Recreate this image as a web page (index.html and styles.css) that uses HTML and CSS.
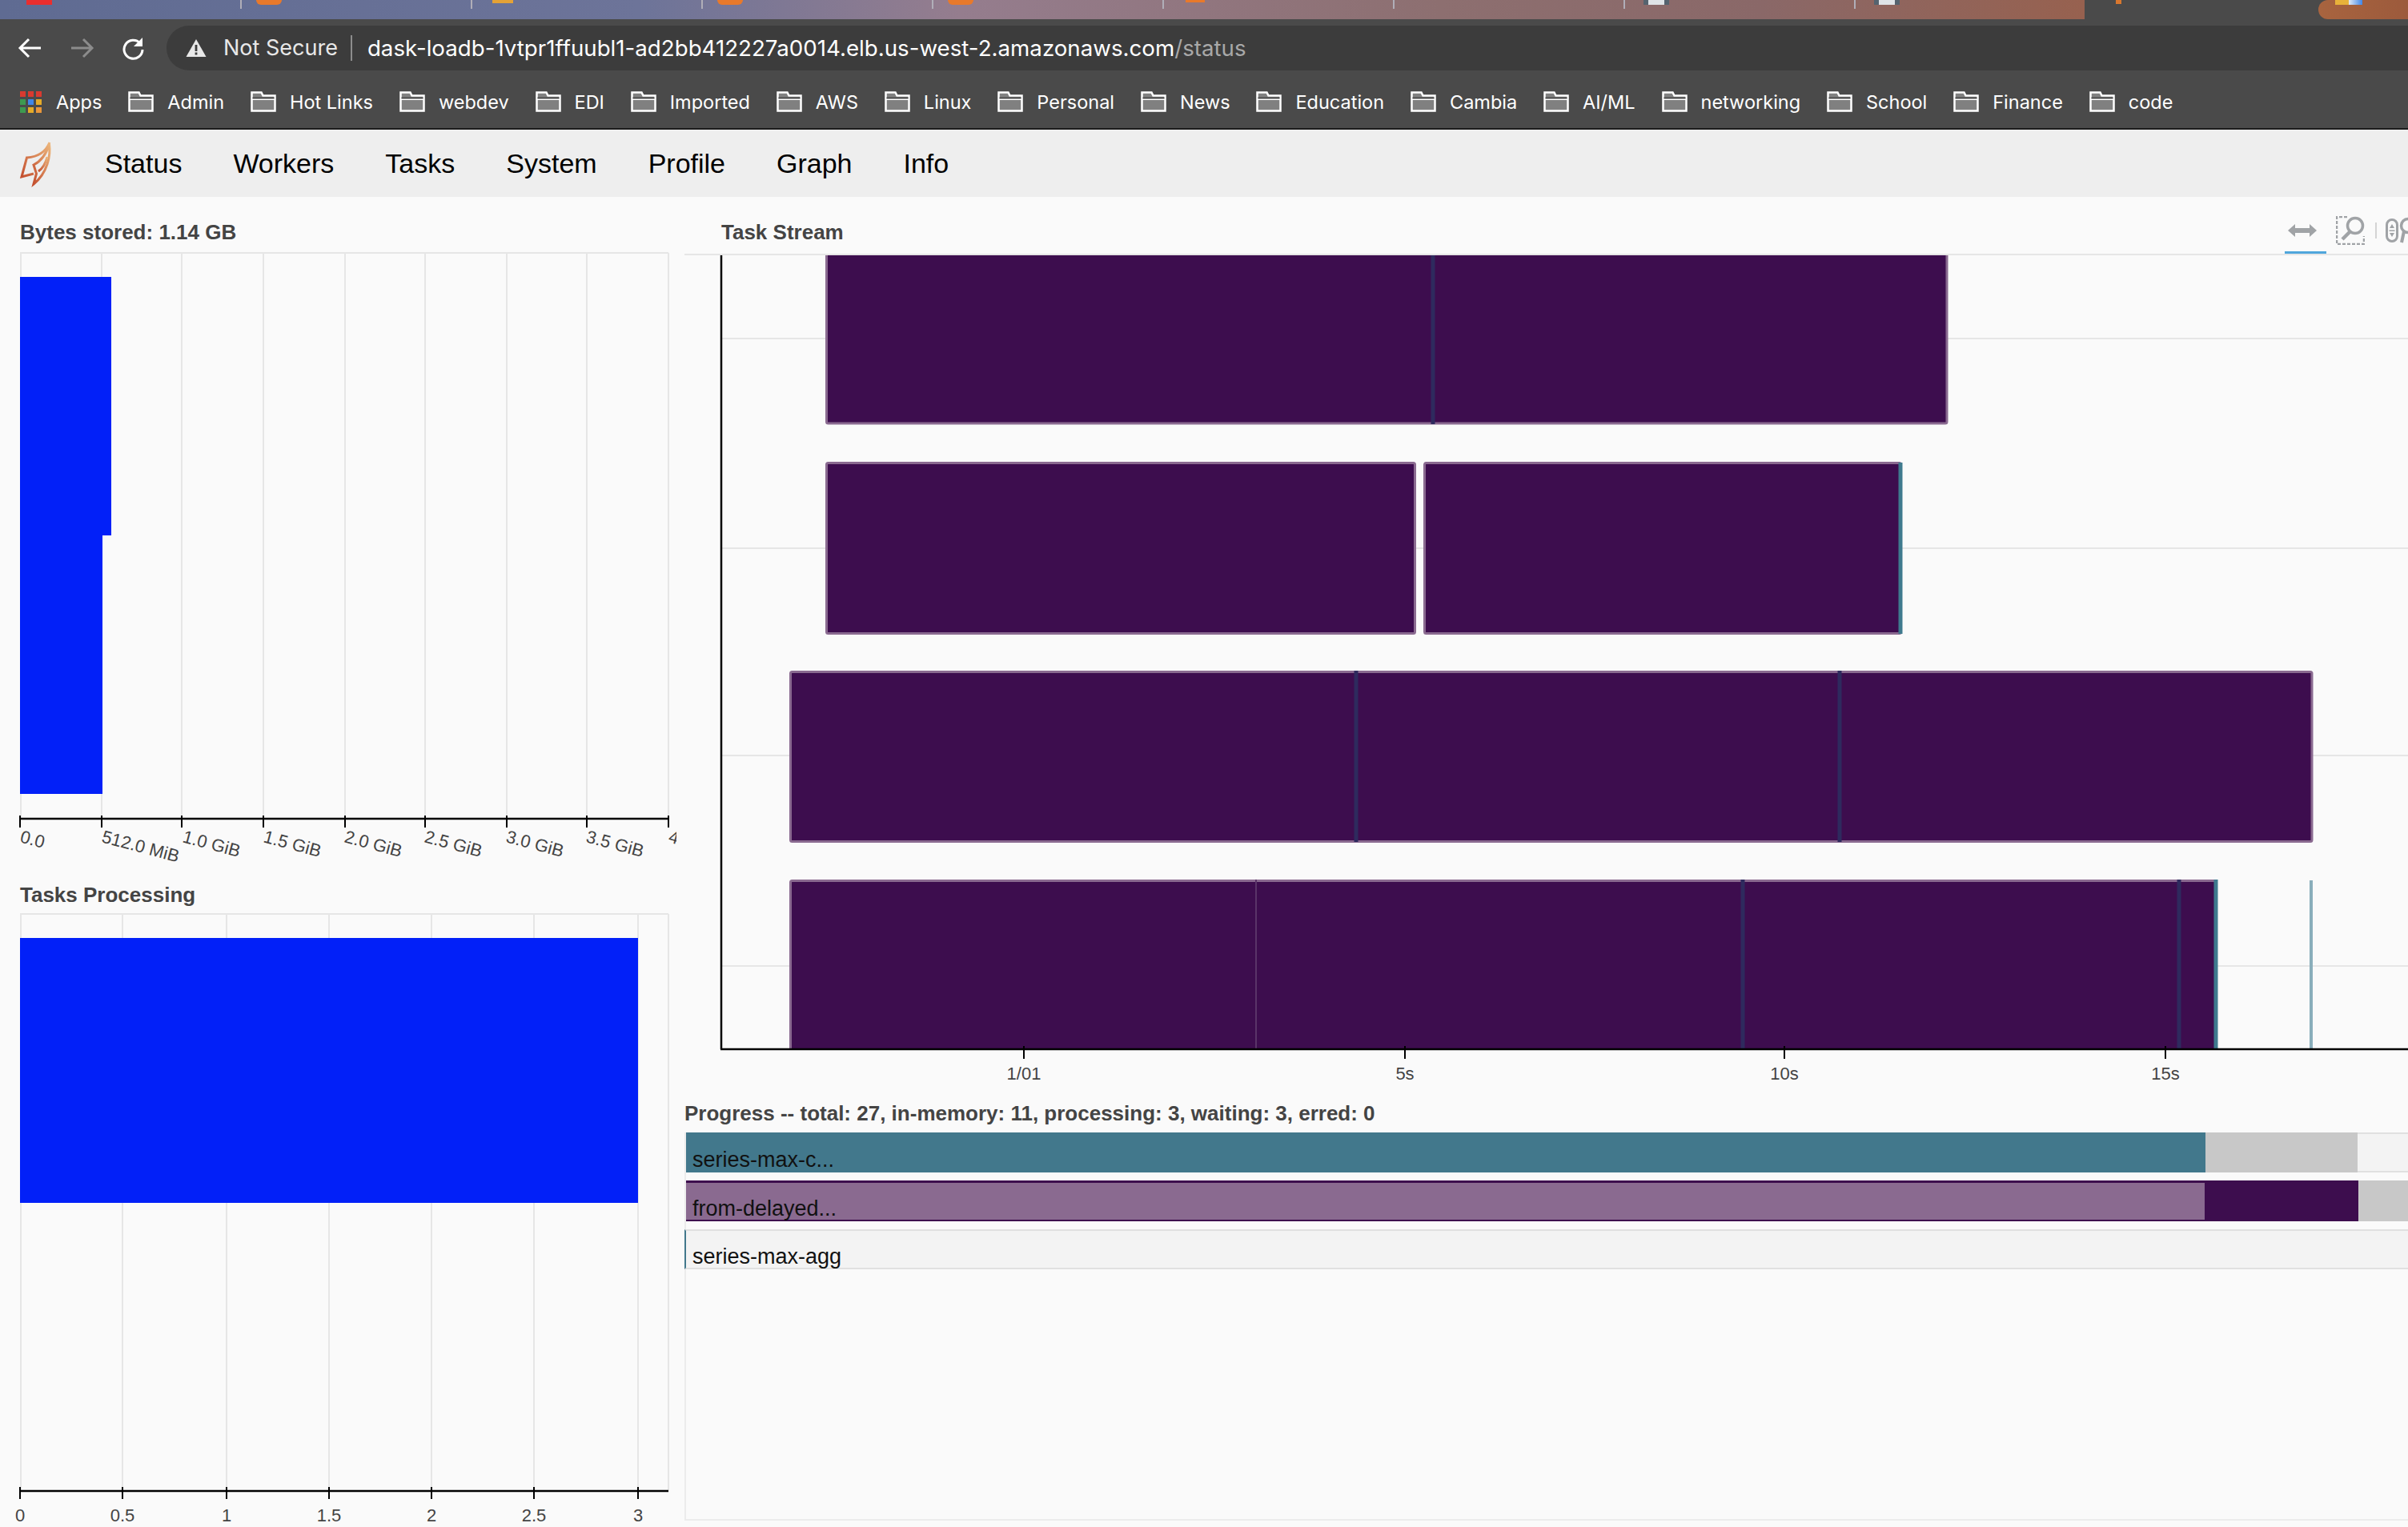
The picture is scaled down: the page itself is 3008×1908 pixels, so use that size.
FILE: index.html
```html
<!DOCTYPE html>
<html lang="en">
<head>
    <meta charset="UTF-8">
    <meta name="viewport" content="width=device-width, initial-scale=1.0">
    <title>Dask: Status</title>
    <link rel="stylesheet" href="styles.css">
</head>
<body>
    <div class="tabstrip">
        <span class="tab tab-first"><i class="favicon favicon-mail"></i></span>
        <span class="tab"><i class="favicon favicon-orange"></i></span>
        <span class="tab"><i class="favicon favicon-amber"></i></span>
        <span class="tab"><i class="favicon favicon-orange"></i></span>
        <span class="tab"><i class="favicon favicon-orange"></i></span>
        <span class="tab"><i class="favicon favicon-outline"></i></span>
        <span class="tab"></span>
        <span class="tab"><i class="favicon favicon-slate"></i></span>
        <span class="tab tab-last"><i class="favicon favicon-slate"></i></span>
        <span class="tab-active"><i class="favicon favicon-spark"></i></span>
        <span class="tab-next"><i class="favicon favicon-flag"></i></span>
    </div>

    <div class="toolbar">
        <svg class="nav-icon" viewBox="0 0 32 32"><path d="M29 16H4M14 5L3 16l11 11" fill="none" stroke="#fff" stroke-width="3"/></svg>
        <svg class="nav-icon" viewBox="0 0 32 32"><path d="M3 16h25M18 5l11 11-11 11" fill="none" stroke="#8c8c8c" stroke-width="3"/></svg>
        <svg class="nav-icon" viewBox="0 0 32 32"><path d="M25 10a11.500 11.500 0 1 0 3 8" fill="none" stroke="#fff" stroke-width="3"/><path d="M28 3v11H17z" fill="#fff"/></svg>
        <div class="omnibox">
            <svg class="warn-icon" viewBox="0 0 26 24"><path d="M13 1l12.500 22H.5z" fill="#e8e8e8"/><path d="M11.600 8h2.800v8h-2.800zM11.600 17.500h2.800v3h-2.800z" fill="#3c3c3c"/></svg>
            <span class="not-secure">Not Secure</span>
            <span class="url">dask-loadb-1vtpr1ffuubl1-ad2bb412227a0014.elb.us-west-2.amazonaws.com<span class="url-path">/status</span></span>
        </div>
    </div>

    <div class="bookmarks">
        <a class="bookmark"><span class="apps-grid"><i class="r"></i><i class="r"></i><i class="r"></i><i class="g"></i><i class="b"></i><i class="y"></i><i class="g"></i><i class="y"></i><i class="o"></i></span>Apps</a>
        <a class="bookmark"><svg class="folder"><use href="#folder"/></svg>Admin</a>
        <a class="bookmark"><svg class="folder"><use href="#folder"/></svg>Hot Links</a>
        <a class="bookmark"><svg class="folder"><use href="#folder"/></svg>webdev</a>
        <a class="bookmark"><svg class="folder"><use href="#folder"/></svg>EDI</a>
        <a class="bookmark"><svg class="folder"><use href="#folder"/></svg>Imported</a>
        <a class="bookmark"><svg class="folder"><use href="#folder"/></svg>AWS</a>
        <a class="bookmark"><svg class="folder"><use href="#folder"/></svg>Linux</a>
        <a class="bookmark"><svg class="folder"><use href="#folder"/></svg>Personal</a>
        <a class="bookmark"><svg class="folder"><use href="#folder"/></svg>News</a>
        <a class="bookmark"><svg class="folder"><use href="#folder"/></svg>Education</a>
        <a class="bookmark"><svg class="folder"><use href="#folder"/></svg>Cambia</a>
        <a class="bookmark"><svg class="folder"><use href="#folder"/></svg>AI/ML</a>
        <a class="bookmark"><svg class="folder"><use href="#folder"/></svg>networking</a>
        <a class="bookmark"><svg class="folder"><use href="#folder"/></svg>School</a>
        <a class="bookmark"><svg class="folder"><use href="#folder"/></svg>Finance</a>
        <a class="bookmark"><svg class="folder"><use href="#folder"/></svg>code</a>
    </div>

    <svg class="defs">
        <symbol id="folder" viewBox="0 0 32 26">
            <path d="M1.500 24.500V1.500h12l2 4h15v19z" fill="#808080" stroke="#fff" stroke-width="2.500"/>
            <path d="M2 10h29" stroke="#fff" stroke-width="2"/>
            <path d="M2.500 7.500h27v2h-27z" fill="#4a4a4a"/>
        </symbol>
        <linearGradient id="leaf" x1="0" y1="1" x2="1" y2="0">
            <stop offset="0" stop-color="#c4502f"/>
            <stop offset="1" stop-color="#ecb67c"/>
        </linearGradient>
        <clipPath id="bytes-clip"><rect x="0" y="310" width="845" height="788"/></clipPath>
    </svg>

    <nav class="topnav">
        <svg class="logo" viewBox="20 168 50 64">
            <g fill="none" stroke="url(#leaf)" stroke-width="3">
                <path d="M42 213l-15 4 6.500-24c14-1 24-8 28.500-19"/>
                <path d="M42 226l3.500-13-3.500-11c10-5 16-14 19.500-26 2 14-2 36-19.500 50z"/>
                <path d="M48 210c6-4 9-10 11-18"/>
            </g>
        </svg>
        <a class="nav-link">Status</a>
        <a class="nav-link">Workers</a>
        <a class="nav-link">Tasks</a>
        <a class="nav-link">System</a>
        <a class="nav-link">Profile</a>
        <a class="nav-link">Graph</a>
        <a class="nav-link">Info</a>
    </nav>

    <main class="dashboard">
        <section class="left-col">
            <h2 class="plot-title">Bytes stored: 1.14 GB</h2>
            <svg class="plot plot-bytes" viewBox="0 310 855 788">
                <path class="grid" d="M25 316H835M26 316V1022M127 316V1022M227 316V1022M329 316V1022M431 316V1022M531 316V1022M633 316V1022M733 316V1022M835 316V1022"/>
                <path class="bar-blue" d="M25 346H139V669H128V992H25z"/>
                <path class="axis" d="M25 1023H836"/>
                <path class="tick" d="M25 1019V1034M127 1019V1034M227 1019V1034M329 1019V1034M431 1019V1034M531 1019V1034M633 1019V1034M733 1019V1034M835 1019V1034"/>
                <g class="tick-label" clip-path="url(#bytes-clip)">
                    <text x="24" y="1052" transform="rotate(15 24 1052)">0.0</text>
                    <text x="126" y="1052" transform="rotate(15 126 1052)">512.0 MiB</text>
                    <text x="227" y="1052" transform="rotate(15 227 1052)">1.0 GiB</text>
                    <text x="328" y="1052" transform="rotate(15 328 1052)">1.5 GiB</text>
                    <text x="429" y="1052" transform="rotate(15 429 1052)">2.0 GiB</text>
                    <text x="529" y="1052" transform="rotate(15 529 1052)">2.5 GiB</text>
                    <text x="631" y="1052" transform="rotate(15 631 1052)">3.0 GiB</text>
                    <text x="731" y="1052" transform="rotate(15 731 1052)">3.5 GiB</text>
                    <text x="834" y="1052" transform="rotate(15 834 1052)">4.0 GiB</text>
                </g>
            </svg>
            <h2 class="plot-title">Tasks Processing</h2>
            <svg class="plot plot-tasks" viewBox="0 1138 855 770">
                <path class="grid" d="M25 1142H835M26 1142V1862M153 1142V1862M283 1142V1862M411 1142V1862M539 1142V1862M667 1142V1862M797 1142V1862M835 1142V1862"/>
                <rect class="bar-blue" x="25" y="1172" width="772" height="331"/>
                <path class="axis" d="M25 1863H835"/>
                <path class="tick" d="M25 1858V1873M153 1858V1873M283 1858V1873M411 1858V1873M539 1858V1873M667 1858V1873M797 1858V1873"/>
                <g class="tick-label label-mid">
                    <text x="25" y="1901">0</text>
                    <text x="153" y="1901">0.5</text>
                    <text x="283" y="1901">1</text>
                    <text x="411" y="1901">1.5</text>
                    <text x="539" y="1901">2</text>
                    <text x="667" y="1901">2.5</text>
                    <text x="797" y="1901">3</text>
                </g>
            </svg>
        </section>

        <section class="right-col">
            <div class="stream-head">
                <h2 class="plot-title stream-title">Task Stream</h2>
                <div class="plot-tools">
                    <span class="tool tool-active">
                        <svg class="tool-icon" viewBox="0 0 36 16"><path d="M0 8l9-8v5h18V0l9 8-9 8v-5H9v5z" fill="#a0a3a6"/></svg>
                    </span>
                    <span class="tool tool-box">
                        <svg class="tool-icon" viewBox="0 0 36 36"><path d="M14 1H1v34h34V25" fill="none" stroke="#a0a3a6" stroke-width="2.500" stroke-dasharray="4 2"/><circle cx="24" cy="12" r="9.500" fill="#fafafa" stroke="#a0a3a6" stroke-width="3.500"/><path d="M18 19L8 29" stroke="#a0a3a6" stroke-width="4.500"/></svg>
                    </span>
                    <span class="tool-sep"></span>
                    <span class="tool tool-wheel">
                        <svg class="tool-icon" viewBox="0 0 36 36"><rect x="1.500" y="3.500" width="13" height="27" rx="6.500" fill="none" stroke="#a0a3a6" stroke-width="3"/><path d="M4.500 16.500h7v1.500h-7zM8 9l3 5H5zM8 25l3-5H5z" fill="#a0a3a6"/><circle cx="28" cy="11" r="8.500" fill="none" stroke="#a0a3a6" stroke-width="3.500"/><path d="M23 18l-3 14" stroke="#a0a3a6" stroke-width="4"/></svg>
                    </span>
                </div>
            </div>
            <svg class="plot plot-stream" viewBox="855 319 2153 1051">
                <path class="grid" d="M900 423H3008M900 685H3008M900 944H3008M900 1207H3008"/>
                <g class="task">
                    <rect x="1032.500" y="300" rx="2" width="1399.500" height="229"/>
                    <rect x="1032.500" y="578.500" rx="2" width="735" height="213"/>
                    <rect x="1779.500" y="578.500" rx="2" width="595" height="213"/>
                    <rect x="987.500" y="839.500" rx="2" width="1900.500" height="212"/>
                    <rect x="987.500" y="1100.500" rx="2" width="1780" height="240"/>
                </g>
                <rect class="clear-below" x="960" y="1312" width="1900" height="58"/>
                <path class="task-split" d="M1790 319V530M1694 838V1052M2298 838V1052M2177 1099V1310M2722 1099V1310"/>
                <path class="task-split-faint" d="M1569 1099V1310"/>
                <path class="task-end" d="M2374 578V792M2768 1099V1310"/>
                <rect class="task-short" x="2885" y="1100" width="4" height="210"/>
                <path class="axis" d="M901 317V1311M900 1311H3008"/>
                <path class="tick" d="M1279 1307V1323M1755 1307V1323M2229 1307V1323M2705 1307V1323"/>
                <g class="tick-label label-mid">
                    <text x="1279" y="1349">1/01</text>
                    <text x="1755" y="1349">5s</text>
                    <text x="2229" y="1349">10s</text>
                    <text x="2705" y="1349">15s</text>
                </g>
            </svg>
            <h2 class="plot-title progress-title">Progress -- total: 27, in-memory: 11, processing: 3, waiting: 3, erred: 0</h2>
            <div class="progress-list">
                <div class="progress-row">
                    <span class="seg seg-teal" style="width: 1898px"></span>
                    <span class="seg seg-grey" style="width: 190px"></span>
                    <span class="progress-label">series-max-c...</span>
                </div>
                <div class="progress-row row-delayed">
                    <span class="seg seg-mauve" style="width: 1897px"></span>
                    <span class="seg seg-plum" style="width: 192px"></span>
                    <span class="seg seg-grey seg-fill"></span>
                    <span class="progress-label">from-delayed...</span>
                </div>
                <div class="progress-row row-agg">
                    <span class="progress-label">series-max-agg</span>
                </div>
            </div>
        </section>
    </main>
</body>
</html>
```

FILE: styles.css
```css
* {
    box-sizing: border-box;
}
html, body {
    margin: 0;
    height: 100%;
    overflow: hidden;
}
body {
    width: 3008px;
    height: 1908px;
    font-family: "Liberation Sans", Arial, sans-serif;
    background-color: #fafafa;
}
.defs {
    position: absolute;
    width: 0;
    height: 0;
}

/* browser chrome */
.tabstrip {
    display: flex;
    height: 24px;
    background: linear-gradient(90deg, #5f6b92 0, #6d7499 800px, #957d8e 1200px, #8d6f70 1800px, #8a6868 2200px, #97614f 2604px, #4a4a4a 2604px);
    overflow: hidden;
}
.tab {
    position: relative;
    width: 288px;
    height: 24px;
    border-right: 2px solid #b0aeb8;
    border-image: linear-gradient(#b0aeb8 11px, transparent 11px) 1;
}
.tab-first {
    width: 302px;
}
.tab-last {
    width: 287px;
    border: 0;
}
.tab-active {
    position: relative;
    width: 291px;
    height: 24px;
    background-color: #4a4a4a;
}
.tab-next {
    position: relative;
    flex: 1;
    background: linear-gradient(90deg, #a8643f, #9c5a3c);
    border-top-left-radius: 14px;
    border-bottom-left-radius: 14px;
}
.favicon {
    position: absolute;
    top: 0;
    left: 33px;
    width: 32px;
    height: 6px;
}
.favicon-mail {
    background-color: #ea2e2e;
}
.favicon-orange {
    left: 18px;
    background-color: #e8792b;
    border-radius: 0 0 16px 16px;
}
.favicon-amber {
    left: 25px;
    width: 26px;
    height: 4px;
    background-color: #e4a236;
}
.favicon-outline {
    left: 27px;
    width: 24px;
    height: 3px;
    background-color: #e8792b;
}
.favicon-slate {
    left: 23px;
    background-color: #dfe4e8;
    border-left: 6px solid #55636f;
    border-right: 6px solid #55636f;
}
.favicon-spark {
    left: 38px;
    width: 7px;
    height: 5px;
    background-color: #d9772e;
}
.favicon-flag {
    left: 21px;
    width: 34px;
    background: linear-gradient(90deg, #e8b23a 50%, #dfe9f5 50%, #3f86e8);
}
.toolbar {
    display: flex;
    align-items: center;
    gap: 32px;
    height: 64px;
    padding: 8px 0 0 22px;
    background-color: #4a4a4a;
}
.nav-icon {
    width: 32px;
    height: 32px;
    flex: none;
}
.omnibox {
    display: flex;
    align-items: center;
    flex: 1;
    height: 56px;
    margin-left: -6px;
    padding-left: 24px;
    background-color: #3c3c3c;
    border-radius: 28px 0 0 28px;
    font-family: Inter, "Liberation Sans", sans-serif;
    font-size: 27px;
    color: #fff;
}
.warn-icon {
    width: 26px;
    height: 24px;
    margin-right: 21px;
}
.not-secure {
    color: #e8e8e8;
    padding-right: 16px;
    margin-right: 19px;
    border-right: 2px solid #8c8c8c;
    line-height: 32px;
}
.url {
    font-size: 27.700px;
}
.url-path {
    color: #a8a8a8;
}
.bookmarks {
    display: flex;
    align-items: center;
    gap: 32.900px;
    height: 74px;
    padding: 6px 0 0 25px;
    background-color: #4a4a4a;
    border-bottom: 2px solid #1c1c1c;
    font-family: Inter, "Liberation Sans", sans-serif;
    font-size: 23.500px;
    color: #fff;
}
.bookmark {
    display: flex;
    align-items: center;
    gap: 17px;
}
.folder {
    width: 32px;
    height: 26px;
}
.apps-grid {
    display: grid;
    grid-template-columns: repeat(3, 7px);
    grid-auto-rows: 7px;
    gap: 3px;
    margin-right: 1px;
}
.apps-grid .r { background-color: #d93a30; }
.apps-grid .g { background-color: #3d9a50; }
.apps-grid .b { background-color: #3f86e8; }
.apps-grid .y { background-color: #e4aa28; }
.apps-grid .o { background-color: #e8963a; }

/* dashboard nav */
.topnav {
    display: flex;
    align-items: center;
    height: 84px;
    padding-left: 20px;
    background-color: #eeeeee;
    font-size: 34px;
    color: #000;
}
.logo {
    width: 50px;
    height: 64px;
    margin-right: 29px;
}
.nav-link {
    padding: 0 32px;
}

/* panels */
.dashboard {
    display: grid;
    grid-template-columns: 855px 1fr;
    height: 1662px;
    padding-top: 24px;
}
.left-col .plot-title {
    padding-left: 25px;
}
.plot-title {
    margin: 0;
    height: 40px;
    line-height: 41px;
    font-size: 26px;
    font-weight: bold;
    color: #444;
    white-space: nowrap;
}
.plot {
    display: block;
}
.plot-bytes {
    width: 855px;
    height: 788px;
}
.plot-tasks {
    width: 855px;
    height: 770px;
}
.plot-stream {
    width: 2153px;
    height: 1051px;
}
.grid {
    fill: none;
    stroke: #e6e6e6;
    stroke-width: 2;
}
.bar-blue {
    fill: #0220f8;
}
.axis {
    fill: none;
    stroke: #000;
    stroke-width: 2.500;
}
.tick {
    fill: none;
    stroke: #000;
    stroke-width: 2;
}
.tick-label {
    font-size: 22px;
    fill: #444;
}
.label-mid {
    text-anchor: middle;
}
.stream-head {
    display: flex;
    justify-content: space-between;
    height: 49px;
    border-bottom: 2px solid #e6e6e6;
}
.stream-title {
    margin-left: 46px;
}
.plot-tools {
    display: flex;
    align-items: flex-start;
    overflow: hidden;
    width: 154px;
}
.tool {
    display: flex;
    flex: none;
    width: 52px;
    height: 48px;
}
.tool-active {
    padding: 10px 0 0 4px;
    border-bottom: 4px solid #4fa6dc;
}
.tool-icon {
    width: 36px;
    height: 36px;
}
.tool-active .tool-icon {
    height: 16px;
}
.tool-box {
    padding-left: 12px;
}
.tool-sep {
    flex: none;
    width: 2px;
    height: 20px;
    margin: 8px 11px 0 9px;
    background-color: #d4d4d4;
}
.tool-wheel {
    padding-top: 1px;
}
.task rect {
    fill: #3d0d4e;
    stroke: #8a6a90;
    stroke-width: 3;
}
.clear-below {
    fill: #fafafa;
}
.task-split {
    fill: none;
    stroke: #2e2a5e;
    stroke-width: 5;
}
.task-split-faint {
    fill: none;
    stroke: #5a3468;
    stroke-width: 2;
}
.task-end {
    fill: none;
    stroke: #3f7a8e;
    stroke-width: 5;
}
.task-short {
    fill: #8aaebb;
}
.progress-title {
    height: 45px;
    line-height: 42px;
}
.progress-list {
    display: flex;
    flex-direction: column;
    gap: 10px;
    height: 485px;
    border-left: 2px solid #ececec;
    border-bottom: 2px solid #ececec;
}
.progress-row {
    position: relative;
    display: flex;
    height: 50px;
    background-color: #f3f3f3;
    border-top: 2px solid #e0e0e0;
    border-bottom: 2px solid #e0e0e0;
}
.row-delayed {
    height: 51px;
}
.row-agg {
    border-left: 2px solid #42788c;
    margin-left: -2px;
}
.seg {
    flex: none;
    margin: -2px 0;
}
.seg-teal { background-color: #42788c; }
.seg-grey { background-color: #c8c8c8; }
.seg-mauve {
    background-color: #8a6a90;
    border-top: 3px solid #3d0d4e;
    border-bottom: 2px solid #3d0d4e;
}
.seg-plum { background-color: #3d0d4e; }
.seg-fill { flex: 1; }
.progress-label {
    position: absolute;
    left: 8px;
    bottom: -2px;
    font-size: 27px;
    line-height: 32px;
    color: #111;
}
```
